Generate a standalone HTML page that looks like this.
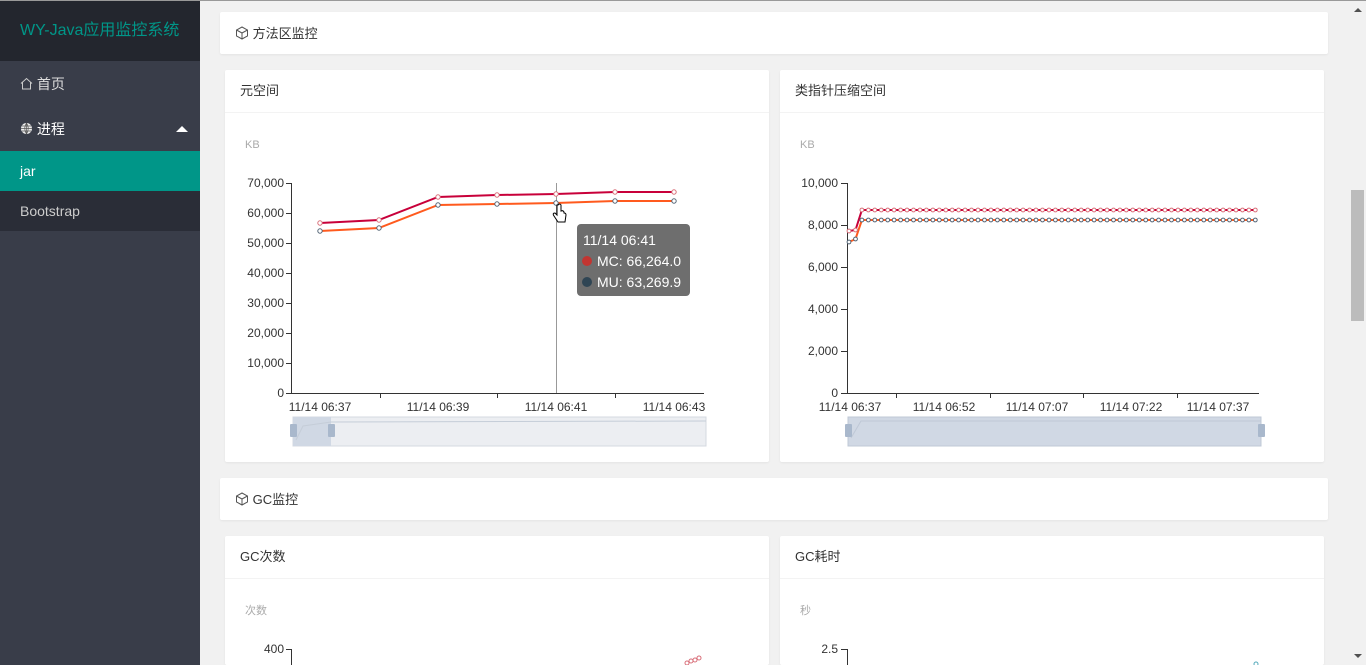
<!DOCTYPE html>
<html><head><meta charset="utf-8">
<style>
*{margin:0;padding:0;box-sizing:border-box}
html{width:1366px;height:665px;overflow:hidden}
body{width:1366px;height:665px;overflow:hidden;background:#f1f1f1;font-family:"Liberation Sans","Noto Sans CJK SC",sans-serif;position:relative}
.topline{position:absolute;left:0;top:0;width:1366px;height:1px;background:#999}
.side{position:absolute;left:0;top:1px;width:200px;height:664px;background:#393d49}
.logo{height:60px;background:#23262e;color:#009688;font-size:16px;line-height:60px;padding-left:20px}
.mi{height:45px;line-height:46px;color:#ddd;font-size:14px;padding-left:20px;position:relative}
.jar{height:40px;line-height:40px;background:#009688;color:#fff;font-size:14px;padding-left:20px}
.bs{height:40px;line-height:41px;background:#2a2d37;color:#ccc;font-size:14px;padding-left:20px}
.panel{position:absolute;background:#fff;border-radius:2px;box-shadow:0 1px 2px rgba(0,0,0,.06);overflow:hidden}
.ph{font-size:13px;color:#333;padding-left:15px;line-height:44px;height:42px}
.card .ph{border-bottom:1px solid #f3f3f3;padding-left:15px;height:43px;line-height:42px}
.sb{position:absolute;left:1349px;top:1px;width:17px;height:664px;background:#f1f1f1}
.thumb{position:absolute;left:1351px;top:190px;width:13px;height:131px;background:#bcbcbc}
svg text{font-family:"Liberation Sans","Noto Sans CJK SC",sans-serif}
</style></head><body>
<div class="topline"></div>
<div class="side">
<div class="logo">WY-Java应用监控系统</div>
<div class="mi"><svg width="13" height="13" viewBox="0 0 13 13" style="vertical-align:-1px"><path d="M1 6.5L6.5 1.5 12 6.5M2.5 5.5V12H10.5V5.5" fill="none" stroke="#ccc" stroke-width="1"/></svg> 首页</div>
<div class="mi" style="color:#fff"><svg width="13" height="13" viewBox="0 0 13 13" style="vertical-align:-1px"><circle cx="6.5" cy="6.5" r="5.5" fill="#eee"/><path d="M1 6.5H12M6.5 1V12M2 4H11M2 9H11M6.5 1Q3 6.5 6.5 12Q10 6.5 6.5 1" fill="none" stroke="#555" stroke-width=".7"/></svg> 进程<span style="position:absolute;right:12px;top:20px;border-left:6px solid transparent;border-right:6px solid transparent;border-bottom:6px solid #fff"></span></div>
<div class="jar">jar</div>
<div class="bs">Bootstrap</div>
</div>

<div class="panel" style="left:220px;top:12px;width:1108px;height:42px"><div class="ph"><svg width="14" height="14" viewBox="0 0 14 14" style="vertical-align:-2px"><path d="M7 1L12.5 4V10L7 13 1.5 10V4Z M1.5 4L7 7 12.5 4M7 7V13" fill="none" stroke="#555" stroke-width="1"/></svg> 方法区监控</div></div>
<div class="panel card" style="left:225px;top:70px;width:544px;height:392px"><div class="ph">元空间</div></div>
<div class="panel card" style="left:780px;top:70px;width:544px;height:392px"><div class="ph">类指针压缩空间</div></div>
<div class="panel" style="left:220px;top:478px;width:1108px;height:42px"><div class="ph"><svg width="14" height="14" viewBox="0 0 14 14" style="vertical-align:-2px"><path d="M7 1L12.5 4V10L7 13 1.5 10V4Z M1.5 4L7 7 12.5 4M7 7V13" fill="none" stroke="#555" stroke-width="1"/></svg> GC监控</div></div>
<div class="panel card" style="left:225px;top:536px;width:544px;height:129px"><div class="ph">GC次数</div></div>
<div class="panel card" style="left:780px;top:536px;width:544px;height:129px"><div class="ph">GC耗时</div></div>

<svg id="ov" width="1366" height="665" style="position:absolute;left:0;top:0" font-size="12"></svg>
<div class="sb"></div>
<div style="position:absolute;left:1354px;top:8px;border-left:4px solid transparent;border-right:4px solid transparent;border-bottom:4px solid #505050"></div>
<div class="thumb"></div>
<div style="position:absolute;left:1354px;top:654px;border-left:4px solid transparent;border-right:4px solid transparent;border-top:4px solid #505050"></div>

<script>
var s='';
function t(x,y,str,a,c,fs){s+='<text x="'+x+'" y="'+y+'" text-anchor="'+(a||'start')+'" fill="'+(c||'#333')+'" font-size="'+(fs||12)+'">'+str+'</text>';}
function l(x1,y1,x2,y2,c,w){s+='<line x1="'+x1+'" y1="'+y1+'" x2="'+x2+'" y2="'+y2+'" stroke="'+(c||'#333')+'" stroke-width="'+(w||1)+'"/>';}
function poly(pts,c,w){s+='<polyline points="'+pts.map(p=>p.join(',')).join(' ')+'" fill="none" stroke="'+c+'" stroke-width="'+w+'"/>';}
function dots(pts,c,r){pts.forEach(p=>{s+='<circle cx="'+p[0]+'" cy="'+p[1]+'" r="'+r+'" fill="#fff" stroke="'+c+'" stroke-width="1"/>';});}
t(245,148,'KB','start','#aaa',11);
var yl=['0','10,000','20,000','30,000','40,000','50,000','60,000','70,000'];
for(var i=0;i<8;i++){var y=393-30*i;t(284,y+4,yl[i],'end','#333');l(286,y+.5,291,y+.5);}
l(291.5,183,291.5,393);l(291,393.5,704,393.5);
[380,497,615].forEach(x=>l(x+.5,393,x+.5,398));
[[320,'11/14 06:37'],[438,'11/14 06:39'],[556,'11/14 06:41'],[674,'11/14 06:43']].forEach(a=>t(a[0],411,a[1],'middle'));
l(556.5,183,556.5,393,'#999');
var xs=[320,379,438,497,556,615,674];
var mc=[223,220,197,195,194,192,192].map((y,i)=>[xs[i],y]);
var mu=[231,228,205,204,203,201,201].map((y,i)=>[xs[i],y]);
poly(mc,'#c8003a',2);poly(mu,'#ff5a1e',2);dots(mc,'#d9707a',2.2);dots(mu,'#556677',2.2);
s+='<rect x="293" y="417" width="413" height="29" fill="#eceef2" stroke="#d5d9e0"/>';
s+='<rect x="293" y="417" width="38" height="29" fill="#d0d8e4"/>';
s+='<path d="M296 440 L303 426 L331 422 L706 421" fill="none" stroke="#c5cdd8"/>';
[293,331].forEach(x=>s+='<rect x="'+(x-3)+'" y="424" width="7" height="13" rx="1" fill="#a9b8cc"/>');
s+='<rect x="577" y="224" width="113" height="72" rx="4" fill="#6e6e6e"/>';
t(583,245,'11/14 06:41','start','#fff',14);
s+='<circle cx="587" cy="261" r="5" fill="#c23531"/><circle cx="587" cy="282" r="5" fill="#2f4554"/>';
t(597,266,'MC: 66,264.0','start','#fff',14);t(597,287,'MU: 63,269.9','start','#fff',14);
s+='<path d="M557 205 v10 l-2 -2 q-3 0 -1 3 l4 6 h7 l1 -7 q0 -2 -2 -2 v-1 q-1 -2 -3 -1 v-6 q-1 -2 -3 0z" fill="#fff" stroke="#000" stroke-width="1"/>';
t(800,148,'KB','start','#aaa',11);
var yr=['0','2,000','4,000','6,000','8,000','10,000'];
for(var i=0;i<6;i++){var y=393-42*i;t(838,y+4,yr[i],'end','#333');l(841,y+.5,847,y+.5);}
l(847.5,183,847.5,393);l(847,393.5,1259,393.5);
[896,990,1083,1177].forEach(x=>l(x+.5,393,x+.5,398));
[[850,'11/14 06:37'],[944,'11/14 06:52'],[1037,'11/14 07:07'],[1131,'11/14 07:22'],[1218,'11/14 07:37']].forEach(a=>t(a[0],411,a[1],'middle'));
var A=[],B=[];for(var i=0;i<64;i++){var x=849+i*6.45;A.push([x.toFixed(1),i==0?231:i==1?230:210]);B.push([x.toFixed(1),i==0?242:i==1?239:220]);}
poly(A,'#c8003a',2);poly(B,'#ff5a1e',2);dots(A,'#d9707a',1.9);dots(B,'#556677',1.9);
s+='<rect x="848" y="417" width="413" height="29" fill="#d0d8e4" stroke="#bfc8d6"/>';
s+='<path d="M851 438 L861 421 L1261 421" fill="none" stroke="#bfc8d6"/>';
[848,1261].forEach(x=>s+='<rect x="'+(x-3)+'" y="424" width="7" height="13" rx="1" fill="#a9b8cc"/>');
t(245,614,'次数','start','#aaa',11);t(284,653,'400','end','#333');l(286,649.5,291,649.5);l(291.5,649,291.5,665);
s+='<path d="M686 665 L690 661 L694 660 L698 658 L701 657" fill="none" stroke="#c8003a" stroke-width="1.5"/>';
dots([[687,663],[691,661],[695,660],[699,658]],'#d9707a',2);
t(800,614,'秒','start','#aaa',11);t(838,653,'2.5','end','#333');l(841,649.5,847,649.5);l(847.5,649,847.5,665);
dots([[1256,664]],'#5ab',2);
document.getElementById('ov').innerHTML=s;
</script>
</body></html>
